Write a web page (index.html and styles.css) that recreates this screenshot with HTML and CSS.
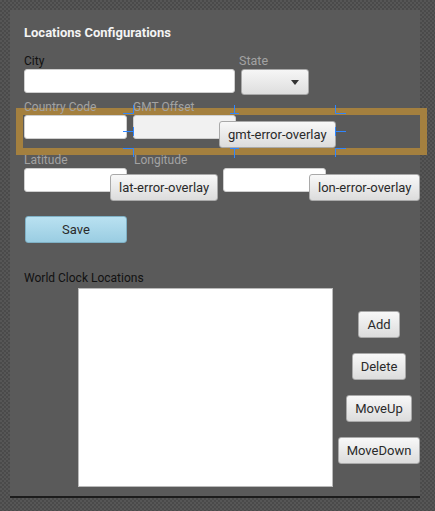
FILE: index.html
```html
<!DOCTYPE html>
<html lang="en">
<head>
    <meta charset="UTF-8">
    <meta name="viewport" content="width=device-width, initial-scale=1.0">
    <title>Locations Configurations</title>
    <link rel="stylesheet" href="styles.css">
</head>
<body>

    <div class="panel">
        <h2 class="title">Locations Configurations</h2>

        <div class="row row-city">
            <div class="field">
                <label class="lbl lbl-dark" for="city">City</label>
                <input type="text" id="city" class="text city-input">
            </div>
            <div class="field state-field">
                <label class="lbl">State</label>
                <div class="select"><span class="arrow"></span></div>
            </div>
        </div>

        <div class="row row-tz">
            <div class="field">
                <label class="lbl" for="country">Country Code</label>
                <input type="text" id="country" class="text">
            </div>
            <div class="field">
                <label class="lbl" for="gmt">GMT Offset</label>
                <div class="input-wrap">
                    <input type="text" id="gmt" class="text text-muted">
                    <button class="btn overlay-btn">gmt-error-overlay</button>
                </div>
            </div>
        </div>

        <div class="row row-geo">
            <div class="field">
                <label class="lbl" for="lat">Latitude</label>
                <div class="input-wrap">
                    <input type="text" id="lat" class="text">
                    <button class="btn overlay-btn">lat-error-overlay</button>
                </div>
            </div>
            <div class="field lon-field">
                <label class="lbl" for="lon">Longitude</label>
                <div class="input-wrap lon-wrap">
                    <input type="text" id="lon" class="text">
                    <button class="btn overlay-btn">lon-error-overlay</button>
                </div>
            </div>
        </div>

        <button class="btn save-btn">Save</button>

        <label class="lbl lbl-dark clock-label">World Clock Locations</label>
        <div class="clock-row">
            <div class="clock-list"></div>
            <div class="clock-actions">
                <button class="btn">Add</button>
                <button class="btn">Delete</button>
                <button class="btn">MoveUp</button>
                <button class="btn">MoveDown</button>
            </div>
        </div>
    </div>

    <!-- highlighted row band, sits under the form controls -->
    <svg class="guides guides-band" width="435" height="511" viewBox="0 0 435 511">
        <rect x="19.5" y="111.5" width="404" height="40" fill="none" stroke="#a4803f" stroke-width="7"/>
    </svg>

    <!-- selection handles around the gmt field -->
    <svg class="guides guides-handles" width="435" height="511" viewBox="0 0 435 511">
        <g stroke="#2f86ff" stroke-width="1" fill="none">
            <path d="M133.5 105V113.5H123"/>
            <path d="M234.5 105V113.5M230 113.5H239"/>
            <path d="M335.5 105V113.5H346"/>
            <path d="M123 131.5H133.5M133.5 127V136"/>
            <path d="M335.5 131.5H346M335.5 127V136"/>
            <path d="M123 148.5H133.5V157"/>
            <path d="M234.5 148.5V158M230 148.5H239"/>
            <path d="M346 148.5H335.5V157"/>
        </g>
    </svg>

</body>
</html>
```

FILE: styles.css
```css
body {
    box-sizing: border-box;
    margin: 0;
    padding: 10px;
    min-height: 511px;
    font-family: Roboto, "Liberation Sans", sans-serif;
    background-color: #505050;
    background-image: repeating-conic-gradient(#4a4a4a 0 25%, #565656 0 50%);
    background-size: 4px 4px;
    position: relative;
}
.panel {
    box-sizing: border-box;
    width: 410px;
    height: 488px;
    padding: 15px 14px 0;
    background-color: #5a5a5a;
    border-bottom: 2px solid #1c1c1c;
}
.title {
    margin: 0;
    font-size: 13px;
    line-height: 15px;
    font-weight: bold;
    color: #f4f4f4;
}
.row {
    display: flex;
    align-items: flex-start;
    position: relative;
    z-index: 1;
}
.row-city {
    margin-top: 14px;
    gap: 4px;
}
.row-tz {
    margin-top: 5px;
    gap: 6px;
}
.row-geo {
    margin-top: 14px;
    gap: 6px;
}
.field {
    display: flex;
    flex-direction: column;
}
.lbl {
    display: block;
    margin-bottom: 1px;
    font-size: 12px;
    line-height: 14px;
    color: #a3a3a3;
}
.lbl-dark {
    color: #111;
}
.text {
    box-sizing: border-box;
    width: 103px;
    height: 24px;
    margin: 0;
    padding: 0 6px;
    border: 1px solid #cfcfcf;
    border-radius: 3px;
    background-color: #fff;
    font: inherit;
}
.text-muted {
    background-color: #f1f1f1;
}
.city-input {
    width: 211px;
}
.state-field .lbl {
    font-size: 12.5px;
}
.select {
    box-sizing: border-box;
    width: 68px;
    height: 26px;
    margin-left: 2px;
    border: 1px solid #a8a8a8;
    border-radius: 3px;
    background: linear-gradient(#f6f6f6, #dedede);
    display: flex;
    align-items: center;
    justify-content: flex-end;
    padding-right: 9px;
}
.arrow {
    width: 0;
    height: 0;
    border-left: 4px solid transparent;
    border-right: 4px solid transparent;
    border-top: 5px solid #333;
}
.input-wrap {
    position: relative;
}
.lon-field .lbl {
    padding-left: 1px;
}
.lon-wrap {
    margin-left: 90px;
}
.btn {
    box-sizing: border-box;
    height: 27px;
    margin: 0;
    padding: 0 8px;
    border: 1px solid #a9a9a9;
    border-radius: 3px;
    background: linear-gradient(#f8f8f8, #dcdcdc);
    color: #2a2a2a;
    font-family: Roboto, "Liberation Sans", sans-serif;
    font-size: 13px;
    white-space: nowrap;
    cursor: pointer;
}
.overlay-btn {
    position: absolute;
    left: 86px;
    top: 6px;
}
.save-btn {
    display: block;
    width: 102px;
    margin: 24px 0 0 1px;
    border-color: #7fb1c6;
    background: linear-gradient(#b9e1f1, #9acde2);
}
.clock-label {
    margin-top: 28px;
    margin-bottom: 3px;
}
.clock-row {
    display: flex;
    align-items: center;
}
.clock-list {
    box-sizing: border-box;
    flex-shrink: 0;
    width: 255px;
    height: 199px;
    margin-left: 54px;
    border: 1px solid #bababa;
    background-color: #fff;
}
.clock-actions {
    flex-shrink: 0;
    width: 80px;
    margin-left: 6px;
    display: flex;
    flex-direction: column;
    align-items: center;
    gap: 15px;
}
.guides {
    position: absolute;
    left: 0;
    top: 0;
    pointer-events: none;
}
.guides-band {
    z-index: 0;
}
.guides-handles {
    z-index: 2;
}
```
